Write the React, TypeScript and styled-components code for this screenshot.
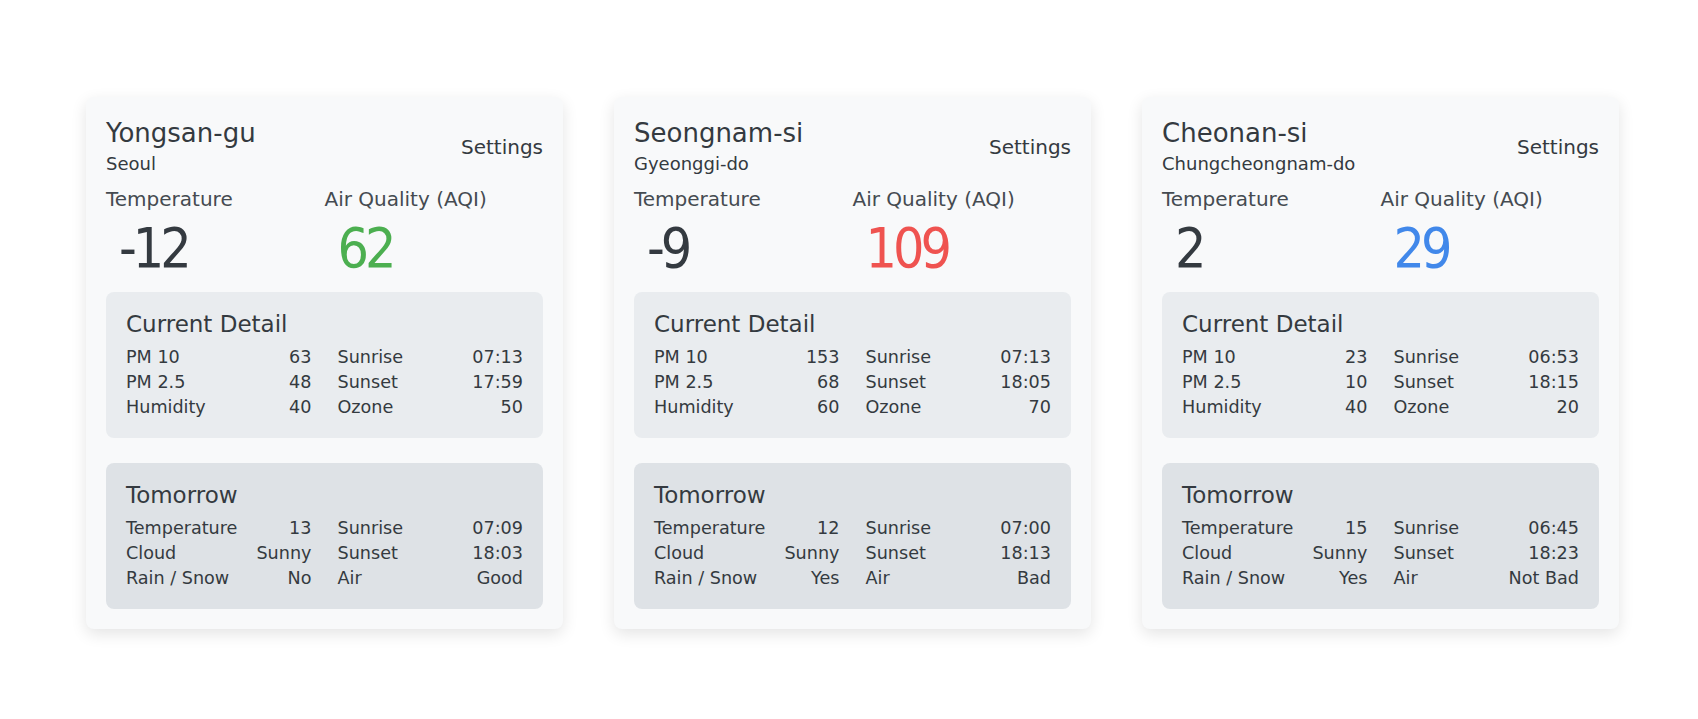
import React from "react";
import styled, { createGlobalStyle } from "styled-components";

const GlobalStyle = createGlobalStyle`
    body {
        margin: 0;
        background-color: #ffffff;
        font-family: "DejaVu Sans", "Noto Sans", sans-serif;
        color: #343a40;
    }
`;

const Page = styled.main`
    display: flex;
    gap: 51px;
    padding: 97px 0 40px 86px;
`;

const Card = styled.section`
    width: 477px;
    box-sizing: border-box;
    padding: 20px;
    background-color: #f8f9fa;
    border-radius: 8px;
    box-shadow: 0 5px 16px rgba(0, 0, 0, 0.11);
    display: flex;
    flex-direction: column;
`;

const Header = styled.header`
    display: flex;
    justify-content: space-between;
    align-items: center;
`;

const City = styled.h2`
    margin: 0;
    font-size: 26px;
    font-weight: 400;
    line-height: 32px;
`;

const Region = styled.p`
    margin: 3px 0 0;
    font-size: 18px;
    line-height: 24px;
`;

const Settings = styled.span`
    font-size: 20px;
    cursor: pointer;
`;

const Stats = styled.div`
    display: grid;
    grid-template-columns: 1fr 1fr;
    margin-top: 9px;
`;

const StatLabel = styled.div`
    font-size: 20px;
    line-height: 28px;
    color: #454b51;
`;

const StatValue = styled.div<{ $color: string }>`
    margin-top: 3px;
    padding-left: 13px;
    font-family: "DejaVu Sans Condensed", "DejaVu Sans", sans-serif;
    font-size: 55px;
    line-height: 64px;
    letter-spacing: -4px;
    color: ${(p) => p.$color};
`;

const Panel = styled.div<{ $bg: string; $gap: number }>`
    margin-top: ${(p) => p.$gap}px;
    padding: 17px 20px 18px;
    border-radius: 8px;
    background-color: ${(p) => p.$bg};
`;

const PanelTitle = styled.h3`
    margin: 0 0 6px;
    font-size: 23px;
    font-weight: 400;
    line-height: 30px;
`;

const PanelGrid = styled.div`
    display: grid;
    grid-template-columns: 1fr 1fr;
    column-gap: 26px;
`;

const Column = styled.div`
    display: flex;
    flex-direction: column;
`;

const Row = styled.div`
    display: flex;
    justify-content: space-between;
    font-size: 17.6px;
    line-height: 25px;
`;

type Pair = [string, string];

interface Place {
    city: string;
    region: string;
    temp: string;
    aqi: string;
    aqiColor: string;
    current: [Pair[], Pair[]];
    tomorrow: [Pair[], Pair[]];
}

const places: Place[] = [
    {
        city: "Yongsan-gu",
        region: "Seoul",
        temp: "-12",
        aqi: "62",
        aqiColor: "#4caf50",
        current: [
            [["PM 10", "63"], ["PM 2.5", "48"], ["Humidity", "40"]],
            [["Sunrise", "07:13"], ["Sunset", "17:59"], ["Ozone", "50"]],
        ],
        tomorrow: [
            [["Temperature", "13"], ["Cloud", "Sunny"], ["Rain / Snow", "No"]],
            [["Sunrise", "07:09"], ["Sunset", "18:03"], ["Air", "Good"]],
        ],
    },
    {
        city: "Seongnam-si",
        region: "Gyeonggi-do",
        temp: "-9",
        aqi: "109",
        aqiColor: "#ef5350",
        current: [
            [["PM 10", "153"], ["PM 2.5", "68"], ["Humidity", "60"]],
            [["Sunrise", "07:13"], ["Sunset", "18:05"], ["Ozone", "70"]],
        ],
        tomorrow: [
            [["Temperature", "12"], ["Cloud", "Sunny"], ["Rain / Snow", "Yes"]],
            [["Sunrise", "07:00"], ["Sunset", "18:13"], ["Air", "Bad"]],
        ],
    },
    {
        city: "Cheonan-si",
        region: "Chungcheongnam-do",
        temp: "2",
        aqi: "29",
        aqiColor: "#4188ea",
        current: [
            [["PM 10", "23"], ["PM 2.5", "10"], ["Humidity", "40"]],
            [["Sunrise", "06:53"], ["Sunset", "18:15"], ["Ozone", "20"]],
        ],
        tomorrow: [
            [["Temperature", "15"], ["Cloud", "Sunny"], ["Rain / Snow", "Yes"]],
            [["Sunrise", "06:45"], ["Sunset", "18:23"], ["Air", "Not Bad"]],
        ],
    },
];

const DetailPanel: React.FC<{ title: string; bg: string; gap: number; data: [Pair[], Pair[]] }> = ({
    title,
    bg,
    gap,
    data,
}) => (
    <Panel $bg={bg} $gap={gap}>
        <PanelTitle>{title}</PanelTitle>
        <PanelGrid>
            {data.map((col, i) => (
                <Column key={i}>
                    {col.map(([label, value]) => (
                        <Row key={label}>
                            <span>{label}</span>
                            <span>{value}</span>
                        </Row>
                    ))}
                </Column>
            ))}
        </PanelGrid>
    </Panel>
);

export default function App() {
    return (
        <>
            <GlobalStyle />
            <Page>
                {places.map((p) => (
                    <Card key={p.city}>
                        <Header>
                            <div>
                                <City>{p.city}</City>
                                <Region>{p.region}</Region>
                            </div>
                            <Settings>Settings</Settings>
                        </Header>

                        <Stats>
                            <div>
                                <StatLabel>Temperature</StatLabel>
                                <StatValue $color="#343a40">{p.temp}</StatValue>
                            </div>
                            <div>
                                <StatLabel>Air Quality (AQI)</StatLabel>
                                <StatValue $color={p.aqiColor}>{p.aqi}</StatValue>
                            </div>
                        </Stats>

                        <DetailPanel title="Current Detail" bg="#e9ecef" gap={12} data={p.current} />
                        <DetailPanel title="Tomorrow" bg="#dee2e6" gap={25} data={p.tomorrow} />
                    </Card>
                ))}
            </Page>
        </>
    );
}
